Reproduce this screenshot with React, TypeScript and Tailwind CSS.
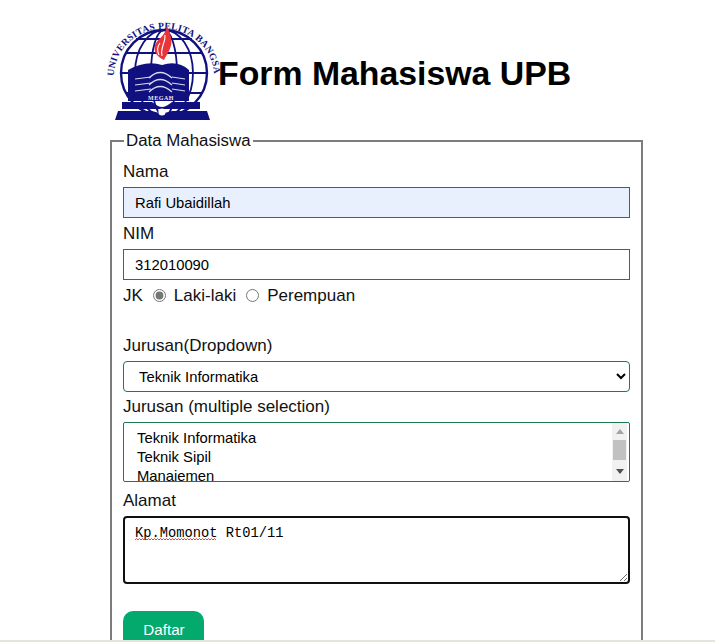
function Logo() {
  const navy = '#10107e'
  return (
    <svg viewBox="0 0 120 120" className="h-[120px] w-[120px] shrink-0" aria-label="Logo UPB">
      <defs>
        <path id="logoArc" d="M14 66 A50 47 0 0 1 114 66" />
      </defs>
      <text fontFamily="'Liberation Serif', serif" fontWeight="700" fontSize="9.6" fill={navy}>
        <textPath href="#logoArc" textLength="150" lengthAdjust="spacing">UNIVERSITAS PELITA BANGSA</textPath>
      </text>
      <g fill="none" stroke={navy} strokeWidth="1.8">
        <circle cx="64" cy="63" r="43" strokeWidth="2.4" />
        <ellipse cx="64" cy="63" rx="29" ry="43" />
        <ellipse cx="64" cy="63" rx="13" ry="43" />
        <path d="M21 63H107M26 43H102M36 29H92M26 83H102" />
      </g>
      <path d="M28 60 Q46 50 62 55 Q78 50 89 60 V91 H28Z" fill={navy} />
      <path d="M35 69 L51 67M35 75 L51 73M35 81 L51 79M72 67 L85 69M72 73 L85 75M72 79 L85 81" stroke="#d7dbee" strokeWidth="1.2" />
      <path d="M49 68 Q60 57 72 68M49 75 Q60 64 72 75M49 82 Q60 71 72 82" stroke="#d7dbee" strokeWidth="1.3" fill="none" />
      <text x="61" y="90" textAnchor="middle" fontFamily="'Liberation Serif', serif" fontWeight="700" fontSize="6" fill="#e8e8f4" letterSpacing="0.5">MEGAH</text>
      <path d="M22 92 H52 Q58 97 62 97 Q66 97 72 92 H100 V99 H22Z" fill={navy} />
      <path d="M15 110 L18 101 H52 Q58 103 62 103 Q66 103 72 101 H107 L110 110Z" fill={navy} />
      <circle cx="62" cy="102" r="3.6" fill="#fff" />
      <path d="M67 16 C72 27 73 33 69 41 C67 45 65 47 64 50 C57 47 53 41 55 35 C57 29 65 27 67 16Z" fill="#e8353a" />
      <path d="M65 25 C66 32 60 37 62 46M60 33 C57 37 57 41 59 45" stroke="#fff" strokeWidth="1.1" fill="none" />
    </svg>
  )
}

function ListScrollbar() {
  return (
    <div className="flex h-full w-[15px] shrink-0 flex-col items-center bg-[#f1f1f1]">
      <div className="mt-[6px] h-0 w-0 border-x-[4px] border-b-[5px] border-x-transparent border-b-[#a3a3a3]" />
      <div className="mt-[6px] h-[20px] w-[13px] bg-[#c1c1c1]" />
      <div className="mt-[9px] h-0 w-0 border-x-[4px] border-t-[5px] border-x-transparent border-t-[#505050]" />
    </div>
  )
}

export default function App() {
  const label = 'block h-[30px] pt-[4px] leading-[22px]'
  const field = 'block h-[31px] w-full border border-[#1d7a4c] px-[11px] text-[14.8px] text-black outline-none'

  return (
    <div className="relative h-[642px] overflow-hidden bg-white font-['Liberation_Sans',Arial,sans-serif] text-[17px] text-[#111]">
      <div className="ml-[110px] w-[533px]">
        <div className="-ml-[10px] flex pt-[10px]">
          <Logo />
          <h1 className="-ml-[2px] mt-[41px] text-[33.8px] font-bold leading-[44px] text-black">Form Mahasiswa UPB</h1>
        </div>

        <fieldset className="mt-[1px] h-[600px] border-2 border-[#7c7c7c] px-[11px]">
          <legend className="ml-[1px] px-[2px] text-[16.85px] leading-[19px]">Data Mahasiswa</legend>
          <label htmlFor="nama" className={`${label} h-[37px] pt-[11px]`}>Nama</label>
          <input id="nama" type="text" defaultValue="Rafi Ubaidillah" className={`${field} bg-[#e8f0fe]`} />
          <label htmlFor="nim" className={`${label} h-[31px] pt-[5px]`}>NIM</label>
          <input id="nim" type="text" defaultValue="312010090" className={field} />

          <div className="flex h-[30px] items-center pt-[1px]">
            <span>JK</span>
            <input type="radio" name="jk" defaultChecked className="ml-[10px] mr-[8px] h-[13px] w-[13px] accent-[#767676]" />
            <span>Laki-laki</span>
            <input type="radio" name="jk" className="ml-[10px] mr-[8px] h-[13px] w-[13px]" />
            <span>Perempuan</span>
          </div>

          <label htmlFor="jurusan" className={`${label} mt-[15px] h-[36px] pt-[10px]`}>Jurusan(Dropdown)</label>
          <select id="jurusan" defaultValue="ti" className="block h-[31px] w-full rounded-[4px] border border-[#1d7a4c] bg-white px-[11px] pt-[1px] text-[14.8px] text-black outline-none">
            <option value="ti">Teknik Informatika</option>
            <option value="ts">Teknik Sipil</option>
            <option value="mn">Manajemen</option>
          </select>
          <span className="block h-[30px] pt-[4px] leading-[22px]">Jurusan (multiple selection)</span>
          <div className="flex h-[60px] w-full overflow-hidden rounded-[2px] border border-[#1d7a4c] bg-white pr-[2px] text-[14.8px] leading-[19px] text-black">
            <ul className="flex-1 pl-[13px] pt-[6px]">
              <li>Teknik Informatika</li>
              <li>Teknik Sipil</li>
              <li>Manajemen</li>
            </ul>
            <ListScrollbar />
          </div>
          <label htmlFor="alamat" className={`${label} h-[34px] pt-[8px]`}>Alamat</label>
          <div className="relative">
            <textarea
              id="alamat"
              defaultValue="Kp.Momonot Rt01/11"
              spellCheck={false}
              className="block h-[68px] w-full rounded-[4px] border-2 border-[#101010] px-[10px] py-[7px] font-['Liberation_Mono','DejaVu_Sans_Mono',monospace] text-[13.75px] leading-[17px] text-black outline-none"
            />
            {/* spell-check squiggle */}
            <svg className="absolute left-[12px] top-[22px] h-[3px] w-[82px]" viewBox="0 0 82 3">
              <path d="M0 2 L1.5 0.5 L3 2 L4.5 0.5 L6 2 L7.5 0.5 L9 2 L10.5 0.5 L12 2 L13.5 0.5 L15 2 L16.5 0.5 L18 2 L19.5 0.5 L21 2 L22.5 0.5 L24 2 L25.5 0.5 L27 2 L28.5 0.5 L30 2 L31.5 0.5 L33 2 L34.5 0.5 L36 2 L37.5 0.5 L39 2 L40.5 0.5 L42 2 L43.5 0.5 L45 2 L46.5 0.5 L48 2 L49.5 0.5 L51 2 L52.5 0.5 L54 2 L55.5 0.5 L57 2 L58.5 0.5 L60 2 L61.5 0.5 L63 2 L64.5 0.5 L66 2 L67.5 0.5 L69 2 L70.5 0.5 L72 2 L73.5 0.5 L75 2 L76.5 0.5 L78 2 L79.5 0.5 L81 2" fill="none" stroke="#e3322f" strokeWidth="0.9" />
            </svg>
          </div>
          <button type="button" className="mt-[27px] block h-[40px] w-[81px] rounded-[10px] bg-[#04aa6d] pb-[2px] pl-[1px] text-center text-[15.2px] text-white">
            Daftar
          </button>
        </fieldset>
      </div>
      <div className="absolute inset-x-0 bottom-0 h-[2px] bg-[#e4e4dc]" />
    </div>
  )
}
